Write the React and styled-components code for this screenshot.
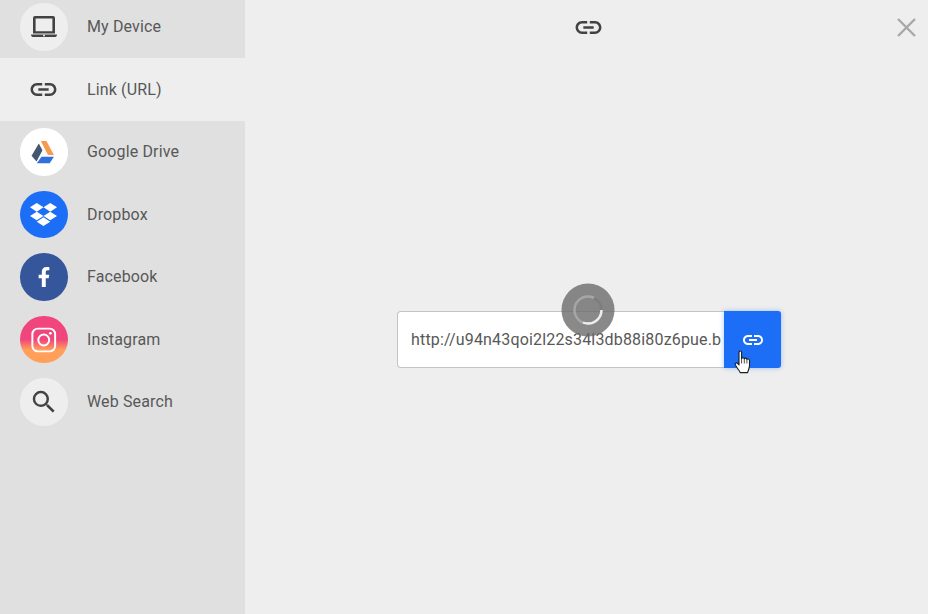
import React from 'react';
import styled, { createGlobalStyle } from 'styled-components';
import { MdLink, MdSearch } from 'react-icons/md';
import { FaDropbox, FaFacebookF } from 'react-icons/fa';

const GlobalStyle = createGlobalStyle`
	html, body {
		margin: 0;
		height: 100%;
		overflow: hidden;
	}
	body {
		font-family: Roboto, "Liberation Sans", sans-serif;
	}
`;

const Container = styled.div`
	width: 928px;
	height: 614px;
	display: flex;
	overflow: hidden;
	background-color: #eeeeee;
`;

const Sidebar = styled.div`
	width: 245px;
	flex-shrink: 0;
	background-color: #e0e0e0;
	overflow: hidden;
`;

const List = styled.ul`
	list-style: none;
	margin: -4.25px 0 0;
	padding: 0;
`;

const Item = styled.li`
	height: 62.5px;
	padding-left: 20px;
	display: flex;
	align-items: center;
	background-color: ${(props) => (props.$active ? '#eeeeee' : 'transparent')};
`;

const Circle = styled.div`
	width: 47.5px;
	height: 47.5px;
	border-radius: 50%;
	flex-shrink: 0;
	display: flex;
	align-items: center;
	justify-content: center;
	color: ${(props) => props.$color || '#424242'};
	background: ${(props) => props.$bg || 'transparent'};
`;

const Label = styled.span`
	margin-left: 19.5px;
	font-size: 16px;
	line-height: 20px;
	letter-spacing: 0.14px;
	color: #585858;
`;

const Main = styled.div`
	flex: 1;
	display: flex;
	flex-direction: column;
	position: relative;
`;

const TopBar = styled.div`
	height: 54px;
	padding-left: 3px;
	display: flex;
	align-items: center;
	justify-content: center;
	color: #424242;
`;

const Close = styled.button`
	position: absolute;
	top: 17px;
	right: 11px;
	width: 21px;
	height: 21px;
	padding: 0;
	border: none;
	background: none;
	display: flex;
`;

const Body = styled.div`
	flex: 1;
	padding: 11px 0 0 5px;
	display: flex;
	align-items: center;
	justify-content: center;
`;

const Form = styled.form`
	position: relative;
	display: flex;
	width: 384px;
	height: 57px;
	margin: 0;
`;

const Input = styled.input`
	width: 327px;
	height: 57px;
	box-sizing: border-box;
	padding: 0 2px 0 13px;
	border: 1px solid #c4c4c4;
	border-right: none;
	border-radius: 4px 0 0 4px;
	outline: none;
	background-color: white;
	color: #585858;
	font-family: Roboto, "Liberation Sans", sans-serif;
	font-size: 16px;
	letter-spacing: 0.17px;
`;

const Submit = styled.button`
	width: 57px;
	height: 57px;
	padding: 0;
	border: none;
	border-radius: 0 3px 3px 0;
	background-color: #1c6ef7;
	box-shadow: 0 0 5px rgba(28, 110, 247, 0.4);
	color: white;
	display: flex;
	align-items: center;
	justify-content: center;
`;

const Spinner = styled.svg`
	position: absolute;
	left: 164px;
	top: -28px;
	width: 54px;
	height: 54px;
`;

const Cursor = styled.svg`
	position: absolute;
	left: 337px;
	top: 39px;
	width: 18px;
	height: 24px;
`;

const LaptopIcon = () => (
	<svg width="26" height="22" viewBox="0 0 26 22" fill="currentColor">
		<path
			fillRule="evenodd"
			d="M4 0h18a2 2 0 0 1 2 2v15.5H2V2a2 2 0 0 1 2-2zM4.6 2.6v12.6h16.8V2.6z"
		/>
		<path d="M0 18.4h26c0 1.7-1 2.6-2.5 2.6h-21C1 21 0 20.1 0 18.4z" />
		<circle cx="13" cy="19.6" r="1" fill="#eeeeee" />
	</svg>
);

const GoogleDriveIcon = () => (
	<svg width="48" height="48" viewBox="0 0 48 48">
		<polygon points="21,13 26.7,13 34.3,27 28.3,27" fill="#f79a4e" />
		<polygon points="19,15.3 22.7,22.3 16.7,33.7 11.7,27.7" fill="#45566f" />
		<polygon points="21.7,28.7 34.3,28.7 30,35.3 17,35.3" fill="#2f6fde" />
	</svg>
);

const InstagramIcon = () => (
	<svg width="48" height="48" viewBox="0 0 48 48" fill="none" stroke="white">
		<rect x="12.5" y="12.5" width="23" height="23" rx="5.5" strokeWidth="2" />
		<circle cx="24" cy="24" r="5.5" strokeWidth="2" />
		<circle cx="30.7" cy="17.3" r="1.4" fill="white" stroke="none" />
	</svg>
);

const items = [
	{ label: 'My Device', bg: '#eeeeee', icon: <LaptopIcon /> },
	{ label: 'Link (URL)', active: true, icon: <MdLink size={31} /> },
	{ label: 'Google Drive', bg: 'white', icon: <GoogleDriveIcon /> },
	{ label: 'Dropbox', bg: '#1c6ef7', color: 'white', icon: <FaDropbox size={27} /> },
	{ label: 'Facebook', bg: '#35569b', color: 'white', icon: <FaFacebookF size={20} /> },
	{
		label: 'Instagram',
		bg: 'linear-gradient(180deg, #f0457d 0%, #f0457d 50%, #ff9f5a 72%, #ff9f5a 100%)',
		icon: <InstagramIcon />,
	},
	{ label: 'Web Search', bg: '#eeeeee', icon: <MdSearch size={30} /> },
];

const App = () => {
	return (
		<Container>
			<GlobalStyle />
			<Sidebar>
				<List>
					{items.map((item) => (
						<Item key={item.label} $active={item.active}>
							<Circle $bg={item.bg} $color={item.color}>
								{item.icon}
							</Circle>
							<Label>{item.label}</Label>
						</Item>
					))}
				</List>
			</Sidebar>
			<Main>
				<TopBar>
					<MdLink size={31} />
				</TopBar>
				<Close aria-label="Close">
					<svg width="21" height="21" viewBox="0 0 21 21">
						<path d="M2 2l17 17M19 2L2 19" stroke="#a8a8a8" strokeWidth="2.4" />
					</svg>
				</Close>
				<Body>
					<Form>
						<Input readOnly value="http://u94n43qoi2l22s34l3db88i80z6pue.b" />
						<Submit type="button">
							<MdLink size={24} />
						</Submit>
						<Spinner viewBox="0 0 54 54">
							<circle cx="27" cy="27" r="26.5" fill="#6c6c6c" fillOpacity="0.8" />
							<circle cx="27" cy="27" r="13.5" fill="none" stroke="#a6a6a6" strokeWidth="2.4" />
							<path
								d="M40.5 27A13.5 13.5 0 0 1 22 39.5"
								fill="none"
								stroke="#eeeeee"
								strokeWidth="2.4"
							/>
							<path d="M33 15A13.5 13.5 0 0 1 40.5 27" fill="none" stroke="#7d7d7d" strokeWidth="3" />
						</Spinner>
						<Cursor viewBox="0 0 18 24">
							<path
								d="M5 2.2c0-1.6 2.6-1.6 2.6 0v6.3c.5-1.2 2.5-1.1 2.7.3.5-1 2.4-.9 2.6.5.6-.8 2.4-.5 2.6 1v5c0 3.6-1.5 5-1.9 7.3H6.2c-.5-1.6-1.7-2.7-3.1-4.9L1.4 15c-.9-1.5 1-2.9 2.2-1.6L5 15V2.2z"
								fill="white"
								stroke="#1d1d1d"
								strokeWidth="1.1"
								strokeLinejoin="round"
							/>
							<path d="M7.6 8.5v5M10.3 8.8v4.7M12.9 9.3v4.2" stroke="#1d1d1d" strokeWidth="0.8" />
						</Cursor>
					</Form>
				</Body>
			</Main>
		</Container>
	);
};

export default App;
